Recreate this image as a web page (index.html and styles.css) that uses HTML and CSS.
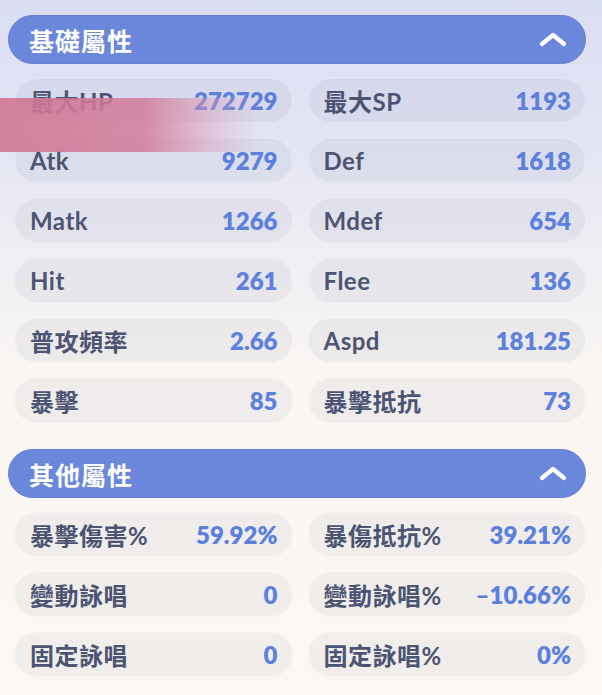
FILE: index.html
```html
<!DOCTYPE html>
<html lang="zh-Hant">
<head>
  <meta charset="UTF-8">
  <meta name="viewport" content="width=device-width, initial-scale=1.0">
  <title>屬性</title>
  <link rel="stylesheet" href="styles.css">
</head>
<body>
  <div class="panel">
    <!-- decorative smear that sits over the first rows -->
    <div class="smear"></div>

    <!-- Basic attributes -->
    <section class="group">
      <div class="group-head">
        <span class="group-title">基礎屬性</span>
        <svg class="chevron" width="28" height="15" viewBox="0 0 28 15"><path d="M3 12 L14 3 L25 12" fill="none" stroke="#fff" stroke-width="4.2" stroke-linecap="round" stroke-linejoin="round"/></svg>
      </div>
      <div class="stat-grid">
        <div class="stat"><span class="label">最大HP</span><span class="value">272729</span></div>
        <div class="stat"><span class="label">最大SP</span><span class="value">1193</span></div>
        <div class="stat"><span class="label">Atk</span><span class="value">9279</span></div>
        <div class="stat"><span class="label">Def</span><span class="value">1618</span></div>
        <div class="stat"><span class="label">Matk</span><span class="value">1266</span></div>
        <div class="stat"><span class="label">Mdef</span><span class="value">654</span></div>
        <div class="stat"><span class="label">Hit</span><span class="value">261</span></div>
        <div class="stat"><span class="label">Flee</span><span class="value">136</span></div>
        <div class="stat"><span class="label">普攻頻率</span><span class="value">2.66</span></div>
        <div class="stat"><span class="label">Aspd</span><span class="value">181.25</span></div>
        <div class="stat"><span class="label">暴擊</span><span class="value">85</span></div>
        <div class="stat"><span class="label">暴擊抵抗</span><span class="value">73</span></div>
      </div>
    </section>

    <!-- Other attributes -->
    <section class="group">
      <div class="group-head">
        <span class="group-title">其他屬性</span>
        <svg class="chevron" width="28" height="15" viewBox="0 0 28 15"><path d="M3 12 L14 3 L25 12" fill="none" stroke="#fff" stroke-width="4.2" stroke-linecap="round" stroke-linejoin="round"/></svg>
      </div>
      <div class="stat-grid">
        <div class="stat"><span class="label">暴擊傷害%</span><span class="value">59.92%</span></div>
        <div class="stat"><span class="label">暴傷抵抗%</span><span class="value">39.21%</span></div>
        <div class="stat"><span class="label">變動詠唱</span><span class="value">0</span></div>
        <div class="stat"><span class="label">變動詠唱%</span><span class="value">–10.66%</span></div>
        <div class="stat"><span class="label">固定詠唱</span><span class="value">0</span></div>
        <div class="stat"><span class="label">固定詠唱%</span><span class="value">0%</span></div>
      </div>
    </section>
  </div>
</body>
</html>
```
FILE: styles.css
```css
html, body { margin: 0; height: 100%; }
body {
  font-family: Lato, "Noto Sans CJK TC", sans-serif;
  background: linear-gradient(to bottom, #dadef3 0, #e3e5f4 140px, #f0eef3 260px, #faf7f3 380px, #fbf8f3 100%);
  overflow: hidden;
}
.panel { position: relative; padding: 15px 16px 0 8px; }
.smear {
  position: absolute; left: 0; top: 98px; width: 260px; height: 54px;
  background: linear-gradient(to right, rgba(207, 118, 148, 0.9) 0, rgba(210, 124, 154, 0.86) 55%, rgba(218, 156, 186, 0.4) 82%, rgba(230, 200, 225, 0) 100%);
  pointer-events: none;
}
.group + .group { margin-top: 26px; }
.group-head {
  height: 49px; box-sizing: border-box; border-radius: 25px;
  background: #6b87dc; border: 1px solid #6480d6;
  display: flex; align-items: center; justify-content: space-between;
  padding: 0 18px 0 20px;
}
.group-title { color: #fff; font-size: 25px; font-weight: 700; letter-spacing: 1px; }
.chevron { display: block; }
.stat-grid {
  display: grid; grid-template-columns: 1fr 1fr;
  column-gap: 15px; row-gap: 15px; padding: 14px 0 0 6px;
}
.stat {
  height: 45px; box-sizing: border-box; border-radius: 23px;
  background: rgba(90, 92, 130, 0.065);
  border: 1px solid rgba(255, 255, 255, 0.35);
  display: flex; align-items: center; justify-content: space-between;
  padding: 0 14px 0 15px;
}
.label { color: #4b5472; font-size: 24px; font-weight: 700; letter-spacing: 0.5px; }
.value { color: #5b80dd; font-size: 24px; font-weight: 800; }
```
